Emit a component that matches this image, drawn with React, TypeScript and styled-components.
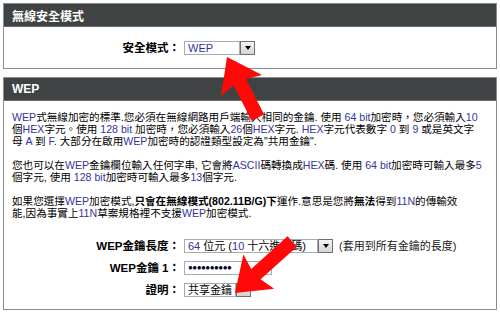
import React, { FC } from 'react';
import styled, { createGlobalStyle } from 'styled-components';

const GlobalStyle = createGlobalStyle`
  html, body {
    margin: 0;
    padding: 0;
    background: #ffffff;
  }
  body {
    font-family: "Liberation Sans", "Noto Sans CJK TC", sans-serif;
    font-size: 11px;
    color: #000000;
  }
`;

const Page = styled.div`
  position: relative;
  width: 500px;
  height: 313px;
  padding: 3px;
  box-sizing: border-box;
  display: flex;
  flex-direction: column;
  gap: 8px;
  overflow: hidden;
`;

const Panel = styled.div<{ $grow?: boolean }>`
  border: 1px solid #8c8c8c;
  background: #ffffff;
  display: flex;
  flex-direction: column;
  flex: ${(p) => (p.$grow ? '1' : 'none')};
`;

const Header = styled.div`
  height: 22px;
  background: #404344;
  color: #ffffff;
  font-weight: bold;
  font-size: 12px;
  display: flex;
  align-items: center;
  padding-left: 8px;
  border-bottom: 1px solid #6a6a6a;
`;

const Body = styled.div<{ $pad: string }>`
  padding: ${(p) => p.$pad};
`;

const Text = styled.p`
  margin: 0 0 12px 0;
  line-height: 12px;
  font-size: 10.6px;
  white-space: nowrap;
  b {
    font-weight: bold;
  }
`;

const Lat = styled.span`
  color: #34349c;
`;

const Form = styled.div`
  display: grid;
  grid-template-columns: 176px auto;
  grid-auto-rows: 14px;
  column-gap: 4px;
  row-gap: 8px;
  align-items: center;
`;

const Label = styled.div`
  text-align: right;
  font-weight: bold;
  font-size: 11.5px;
  line-height: 14px;
  white-space: nowrap;
`;

const Field = styled.div`
  display: flex;
  align-items: center;
  gap: 6px;
  height: 14px;
`;

const Box = styled.div<{ $w: number }>`
  width: ${(p) => p.$w}px;
  height: 14px;
  box-sizing: border-box;
  border: 1px solid #a5acb2;
  background: #ffffff;
  display: flex;
  align-items: center;
  padding-left: 3px;
  font-size: 11px;
  line-height: 12px;
  white-space: pre;
  overflow: hidden;
`;

const Combo = styled.div`
  display: flex;
  align-items: center;
`;

const DropBtn = styled.div`
  width: 15px;
  height: 14px;
  box-sizing: border-box;
  border: 1px solid #707070;
  background: linear-gradient(#f4f4f4, #d4d4d4);
  display: flex;
  align-items: center;
  justify-content: center;
  &::after {
    content: '';
    border-left: 3px solid transparent;
    border-right: 3px solid transparent;
    border-top: 4px solid #000000;
  }
`;

const Dots = styled.span`
  font-size: 8px;
  letter-spacing: -0.5px;
  color: #000030;
`;

const Note = styled.span`
  white-space: nowrap;
  line-height: 14px;
  color: #202020;
`;

const Overlay = styled.svg`
  position: absolute;
  left: 0;
  top: 0;
  pointer-events: none;
`;

const rich = (s: string) =>
  s.split(/([A-Za-z0-9]+(?: bit)?)/).map((part, i) =>
    i % 2 === 1 ? <Lat key={i}>{part}</Lat> : <React.Fragment key={i}>{part}</React.Fragment>
  );

const Select: FC<{ w: number; children: React.ReactNode }> = ({ w, children }) => (
  <Combo>
    <Box $w={w}>{children}</Box>
    <DropBtn />
  </Combo>
);

const Arrow: FC<{ x: number; y: number; angle: number; length: number }> = ({ x, y, angle, length }) => {
  const W = 46;
  const H = 32;
  const S = 14;
  const pts = [
    [0, 0],
    [W / 2, H],
    [S / 2, H * 0.88],
    [S / 2, length],
    [-S / 2, length],
    [-S / 2, H * 0.88],
    [-W / 2, H],
  ]
    .map((p) => p.join(','))
    .join(' ');
  return <polygon points={pts} fill="#ff0808" transform={`translate(${x} ${y}) rotate(${angle})`} />;
};

export default function App() {
  return (
    <>
      <GlobalStyle />
      <Page>
        <Panel>
          <Header>無線安全模式</Header>
          <Body $pad="14px 0 13px 0">
            <Form>
              <Label>安全模式：</Label>
              <Field>
                <Select w={56}>{rich('WEP')}</Select>
              </Field>
            </Form>
          </Body>
        </Panel>

        <Panel $grow>
          <Header>WEP</Header>
          <Body $pad="10px 8px 0 8px">
            <Text>
              {rich('WEP式無線加密的標準.您必須在無線網路用戶端輸入相同的金鑰. 使用 64 bit加密時，您必須輸入10')}
              <br />
              {rich('個HEX字元。使用 128 bit 加密時，您必須輸入26個HEX字元. HEX字元代表數字 0 到 9 或是英文字')}
              <br />
              {rich('母 A 到 F. 大部分在啟用WEP加密時的認證類型設定為"共用金鑰".')}
            </Text>
            <Text>
              {rich('您也可以在WEP金鑰欄位輸入任何字串, 它會將ASCII碼轉換成HEX碼. 使用 64 bit加密時可輸入最多5')}
              <br />
              {rich('個字元, 使用 128 bit加密時可輸入最多13個字元.')}
            </Text>
            <Text>
              {rich('如果您選擇WEP加密模式,')}
              <b>只會在無線模式(802.11B/G)下</b>
              {rich('運作.意思是您將')}
              <b>無法</b>
              {rich('得到11N的傳輸效')}
              <br />
              {rich('能,因為事實上11N草案規格裡不支援WEP加密模式.')}
            </Text>
          </Body>
          <Body $pad="8px 0 0 0">
            <Form>
              <Label>WEP金鑰長度：</Label>
              <Field>
                <Select w={134}>{rich('64 位元 (10 十六進位碼)')}</Select>
                <Note>(套用到所有金鑰的長度)</Note>
              </Field>
              <Label>WEP金鑰 1：</Label>
              <Field>
                <Box $w={88}>
                  <Dots>●●●●●●●●●●</Dots>
                </Box>
              </Field>
              <Label>證明：</Label>
              <Field>
                <Select w={52}>共享金鑰</Select>
              </Field>
            </Form>
          </Body>
        </Panel>

        <Overlay width="500" height="313" viewBox="0 0 500 313">
          <Arrow x={227} y={57} angle={-27} length={68} />
          <Arrow x={235} y={293} angle={-132} length={77} />
        </Overlay>
      </Page>
    </>
  );
}
